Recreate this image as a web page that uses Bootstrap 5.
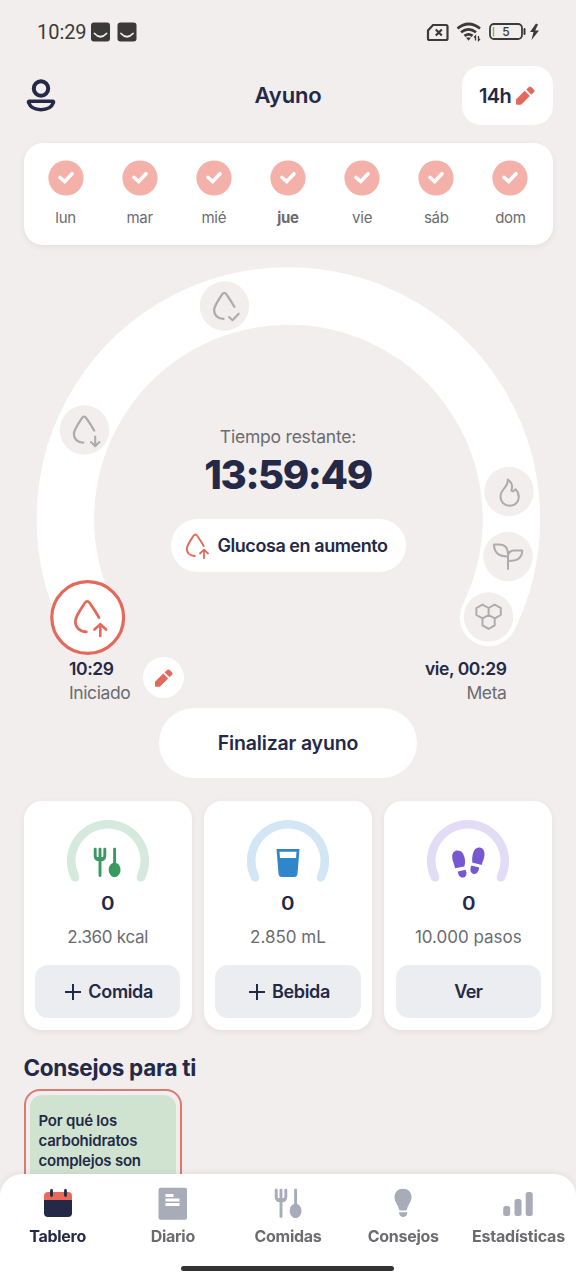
<!DOCTYPE html>
<html lang="es">
<head>
<meta charset="utf-8">
<meta name="viewport" content="width=device-width, initial-scale=1">
<title>Ayuno</title>
<link href="https://cdn.jsdelivr.net/npm/bootstrap@5.3.0/dist/css/bootstrap.min.css" rel="stylesheet">
<style>
:root{--ink:#232946;--muted:#6b6b70;--bg:#f2eeed;--coral:#e2695b;--grey:#a8abb8}
html,body{height:100%}
body{background:var(--bg);color:var(--ink);font-family:Inter,"Liberation Sans",sans-serif;overflow:hidden}
svg{display:block}
.soft-shadow{box-shadow:0 2px 6px rgba(90,70,70,.08)}
.statusbar{height:64px;padding:0 36px 0 37px;color:#3b3a38}
.clock{font:400 20px/24px Roboto,sans-serif;letter-spacing:-.05px}
.topbar{height:61px;padding:2px 23.5px 0 26px}
.page-title{left:0;right:0;top:17px;font-size:22px;line-height:28px;font-weight:600;letter-spacing:-.16px}
.goal-btn{width:91px;height:59px;border-radius:19px;font-size:20px;font-weight:600;letter-spacing:-.6px;gap:5px;color:var(--ink)}
.week{margin:18px 23.5px 0;height:102px;border-radius:19px;padding:16.5px 5px 0}
.day{font-size:15px;line-height:20px;letter-spacing:-.25px;color:var(--muted)}
.day svg{margin-bottom:12px}
.fast{height:463px}
.ring{top:0;left:0}
.remain{padding-top:180px;font-size:17.5px;line-height:24px;letter-spacing:-.21px;color:var(--muted)}
.timer{font-size:40px;line-height:50px;font-weight:800;letter-spacing:-1.4px;padding-top:1px;margin-bottom:-1px}
.stage{width:235px;height:53px;margin-top:20px;font-size:18px;font-weight:600;letter-spacing:-.44px;gap:8px;padding-right:2px}
.times{margin-top:85px;padding:0 69.5px 0 69px;font-size:17.5px;line-height:24px;letter-spacing:-.4px}
.times .edit{width:41px;height:41px;margin:0 0 7px 13px}
.times .sub{color:var(--muted)}
.end-btn{width:258px;height:70px;font-size:19.5px;font-weight:600;letter-spacing:-.17px;color:var(--ink)}
.end-btn span{position:relative;top:.5px}
.stats{margin:23px 23.5px 0;gap:12px}
.stat{height:229px;border-radius:18px;padding:18px 11.5px 0}
.stat .num{font-size:19px;line-height:24px;font-weight:600;margin-top:9px;transform:scaleX(1.08)}
.stat .goal{font-size:17px;line-height:24px;color:var(--muted);margin-top:9px}
.stat .act{height:53px;border-radius:13px;background:#ecedf1;font-size:18px;font-weight:600;letter-spacing:-.35px;margin-top:16px;gap:7px;padding-left:3px}
.tips-title{margin:24px 0 0 23.5px;font-size:22.5px;line-height:28px;font-weight:700;letter-spacing:-.3px}
.tip{margin:7px 0 0 23.5px;width:158.5px;height:200px;border:2px solid #d97b73;border-radius:16px;padding:4px}
.tip-body{background:#d0e3d1;border-radius:12px;padding:15.5px 9px;font-size:15px;line-height:20.4px;font-weight:600;letter-spacing:-.22px}
.tabs{height:106px;border-radius:22px 22px 0 0;box-shadow:0 -1px 6px rgba(90,70,70,.09)}
.tab{flex:1 0 0;width:0;padding-top:12px;font-size:16px;line-height:22px;font-weight:700;letter-spacing:-.28px;color:var(--muted);white-space:nowrap}
.tab svg{margin-bottom:5px}
.tab.on{color:var(--ink)}
.homebar{width:213px;height:5px;bottom:9px;background:#333;border-radius:3px;left:181px}
</style>
</head>
<body>
<svg width="0" height="0" class="position-absolute" aria-hidden="true">
  <defs>
    <symbol id="check" viewBox="0 0 36 36"><circle cx="18" cy="18" r="17.6" fill="#f3b1aa"/><path d="M12 17.500l4.700 4 7.300-7.800" fill="none" stroke="#fff" stroke-width="3.600" stroke-linecap="round" stroke-linejoin="miter"/></symbol>
    <symbol id="pencil" viewBox="0 0 18 18"><path d="M0 16.8V13.2Q0 12.700 .4 12.300L8.300 4.600 13.100 9.500 5.300 17.300Q4.800 17.800 4.200 17.800H1Q0 17.800 0 16.800zM9.700 3.400L12 1.100Q13.300-.2 14.700 1.100L16.900 3.300Q18.200 4.700 16.900 6L14.600 8.200z" fill="#e2695b"/></symbol>
    <symbol id="drop" viewBox="0 0 28 36" overflow="visible"><path d="M12.800 33.200C5.800 33 1.300 28.500 1.300 22.500C1.300 17.500 5 12.500 11.300 3C12.800 .8 14.800 .8 16.200 3C20 8.500 23 13 26 18.300" fill="none" stroke-width="2.800" stroke-linecap="round"/></symbol>
    <symbol id="cutlery" viewBox="0 0 28 30"><path d="M2.200 1.500V8.500Q2.200 12.500 6.800 12.500T11.800 8.500V1.500M7 1.500V28" fill="none" stroke="currentColor" stroke-width="2.900" stroke-linecap="round"/><path d="M3.500 9.500h7v3.500h-7z" fill="currentColor"/><path d="M21.600 1.500V18" stroke="currentColor" stroke-width="2.900" stroke-linecap="round"/><path d="M21.600 15.200C25 15.200 27.500 18.500 27.500 22.200S25 29.500 21.600 29.500 15.700 26 15.700 22.200 18.200 15.200 21.600 15.200z" fill="currentColor"/></symbol>
    <symbol id="gauge" viewBox="0 0 84 64"><path d="M9 58.300A36.800 36.800 0 1 1 75 58.300" fill="none" stroke="currentColor" stroke-width="8.600" stroke-linecap="round"/></symbol>
  </defs>
</svg>

<div class="statusbar d-flex align-items-center justify-content-between">
  <div class="d-flex align-items-center gap-1">
    <span class="clock">10:29</span>
    <svg width="46" height="20" viewBox="0 0 46 20"><g fill="#3b3a38"><rect x="0" y=".5" width="19" height="19" rx="3"/><rect x="26.500" y=".5" width="19" height="19" rx="3"/></g><path d="M3.500 11.500q6 6.500 12 0M30 11.500q6 6.500 12 0" fill="none" stroke="#f2eeed" stroke-width="1.800" stroke-linecap="round"/></svg>
  </div>
  <svg width="114" height="22" viewBox="426 21 114 22" fill="none" stroke="#3b3a38">
    <path d="M433 25h13q1.500 0 1.500 1.500v12q0 1.500-1.500 1.500h-16.500q-1.500 0-1.500-1.500v-8z" stroke-width="2.200"/><path d="M435.800 29.500l6 6M441.800 29.500l-6 6" stroke-width="2.200"/>
    <path d="M457.500 28.500q11-9 22.500 0M461 32.300q7.500-6 15 0M464.500 35.900q4.200-3.200 8 0" stroke-width="2.700"/><path d="M466 37.500h5l-2.500 3.200z" fill="#3b3a38" stroke="none"/><path d="M475.500 40.500v-4.500l-1.500 1.500M478.500 36v4.500l1.500-1.500" stroke-width="1.300"/>
    <rect x="490" y="24" width="32" height="15" rx="4" stroke-width="1.800"/><path d="M524.500 29v5" stroke-width="2" stroke-linecap="round"/><path d="M493.500 27v9.500" stroke="#72c04d" stroke-width="1.400"/>
    <text x="502.300" y="36" font-family="Inter" font-size="12" font-weight="500" fill="#3b3a38" stroke="none">5</text>
    <path d="M536 23.500l-6 8.500h3.500l-2 8 7.500-9.500h-3.800l2.800-6z" fill="#3b3a38" stroke="none"/>
  </svg>
</div>

<header class="topbar position-relative d-flex align-items-center justify-content-between">
  <svg width="30" height="34" viewBox="0 0 30 34" fill="none" stroke="#232946" stroke-width="4"><circle cx="15" cy="9.500" r="7.200"/><path d="M3.500 22.200Q2 22.200 2.600 23.700C4.300 28.200 9 30.700 15 30.700S25.700 28.200 27.400 23.700Q28 22.200 26.500 22.200z" stroke-width="3.500"/></svg>
  <h1 class="page-title position-absolute text-center m-0">Ayuno</h1>
  <button class="goal-btn btn bg-white border-0 p-0 d-flex align-items-center justify-content-center">14h <svg width="19" height="19"><use href="#pencil"/></svg></button>
</header>

<section class="week soft-shadow bg-white d-flex">
  <div class="day flex-fill w-100 d-flex flex-column align-items-center"><svg width="36" height="36"><use href="#check"/></svg>lun</div>
  <div class="day flex-fill w-100 d-flex flex-column align-items-center"><svg width="36" height="36"><use href="#check"/></svg>mar</div>
  <div class="day flex-fill w-100 d-flex flex-column align-items-center"><svg width="36" height="36"><use href="#check"/></svg>mié</div>
  <div class="day flex-fill w-100 d-flex flex-column align-items-center fw-bold"><svg width="36" height="36"><use href="#check"/></svg>jue</div>
  <div class="day flex-fill w-100 d-flex flex-column align-items-center"><svg width="36" height="36"><use href="#check"/></svg>vie</div>
  <div class="day flex-fill w-100 d-flex flex-column align-items-center"><svg width="36" height="36"><use href="#check"/></svg>sáb</div>
  <div class="day flex-fill w-100 d-flex flex-column align-items-center"><svg width="36" height="36"><use href="#check"/></svg>dom</div>
</section>

<section class="fast position-relative">
  <svg class="ring position-absolute" width="576" height="420" viewBox="0 245 576 420">
    <path d="M88.300 617A223 223 0 1 1 488.500 617" fill="none" stroke="#fff" stroke-width="57.500" stroke-linecap="round" transform="translate(0 .5)"/>
    <g fill="#f2eeed"><circle cx="84.500" cy="430" r="24.700"/><circle cx="224.500" cy="306" r="24.700"/><circle cx="509" cy="491.500" r="24.700"/><circle cx="508" cy="556.500" r="24.700"/><circle cx="488.500" cy="617" r="24.700"/></g>
    <g fill="none" stroke="#adabae" stroke-width="2.100" stroke-linecap="round" stroke-linejoin="round">
      <use href="#drop" x="72.800" y="415.500" width="23" height="29.500"/>
      <path d="M95.200 436.500v9.500M91 442l4.200 4.200 4.200-4.200"/>
      <use href="#drop" x="213" y="291.700" width="23" height="29.500"/>
      <path d="M229 317l3.500 3.200 6.200-6.500"/>
      <path d="M507.800 479.500C511.500 482 513 486 511.300 490.500Q512.800 492.500 515.500 489.200C518 492 518.800 494.500 518.800 497C518.800 502 515 505.800 509.800 505.800S500.500 502 500.500 496.500C500.500 489 508.500 487.500 507.800 479.500z" stroke-width="2"/>
      <path d="M508 569V557Q508 550.500 514.500 550.500H522.200C522.200 557 518.500 561 508.500 561M508 556.500C498 556.500 494 551.500 494 544.500H499.500C505.500 544.500 508 548.500 508 554" stroke-width="2"/>
      <path d="M482.500 604.900l6.100 3.400v7l-6.100 3.400-6.100-3.400v-7zM494.700 604.900l6.100 3.400v7l-6.100 3.400-6.100-3.400v-7zM488.600 615.300l6.100 3.400v7l-6.100 3.400-6.100-3.400v-7z" stroke-width="2" transform="translate(0 -.3)"/>
    </g>
    <circle cx="87.700" cy="617.500" r="35.900" fill="#fff" stroke="#e2695b" stroke-width="3.200"/>
    <g fill="none" stroke="#e2695b" stroke-width="2.600" stroke-linecap="round" stroke-linejoin="round"><use href="#drop" x="74" y="600" width="27" height="34.500"/><path d="M100.300 636v-10.500M94.500 629.500l5.800-5.300 5.800 5.300"/></g>
  </svg>
  <div class="position-relative d-flex flex-column align-items-center">
    <div class="remain">Tiempo restante:</div>
    <div class="timer">13:59:49</div>
    <div class="stage bg-white rounded-pill d-flex align-items-center justify-content-center">
      <svg width="23" height="26" viewBox="0 0 23 26" fill="none" stroke="#e2695b" stroke-width="1.800" stroke-linecap="round" stroke-linejoin="round"><use href="#drop" x="0" y=".5" width="19" height="24.500"/><path d="M18 25.200v-8M14 20.500l4-3.800 4 3.800"/></svg>
      Glucosa en aumento
    </div>
  </div>
  <div class="times position-relative d-flex justify-content-between">
    <div class="d-flex align-items-center">
      <div><div class="fw-semibold">10:29</div><div class="sub">Iniciado</div></div>
      <button class="edit btn bg-white rounded-circle border-0 p-0 d-flex align-items-center justify-content-center"><svg width="18" height="18"><use href="#pencil"/></svg></button>
    </div>
    <div class="text-end"><div class="fw-semibold">vie, 00:29</div><div class="sub">Meta</div></div>
  </div>
</section>

<button class="end-btn btn bg-white rounded-pill border-0 d-block mx-auto p-0"><span>Finalizar ayuno</span></button>

<section class="stats d-flex">
  <div class="stat soft-shadow bg-white flex-fill w-100 text-center">
    <svg class="mx-auto" width="84" height="64" viewBox="0 0 84 64"><use href="#gauge" color="#d6e9dd"/><use href="#cutlery" x="27" y="28.500" width="28" height="30" color="#389a5e"/></svg>
    <div class="num">0</div><div class="goal" style="letter-spacing:-.28px">2.360 kcal</div>
    <div class="act d-flex align-items-center justify-content-center"><svg width="16" height="16" stroke="#232946" stroke-width="2"><path d="M0 8h16M8 0v16"/></svg>Comida</div>
  </div>
  <div class="stat soft-shadow bg-white flex-fill w-100 text-center">
    <svg class="mx-auto" width="84" height="64" viewBox="0 0 84 64"><use href="#gauge" color="#d3e6f5"/><path d="M30.500 30h23l-2 24.500q-.3 3.500-3.500 3.500h-12q-3.200 0-3.500-3.500zM33.500 32.700l.5 6.300h16l.5-6.300z" fill="#2f86cb" fill-rule="evenodd"/></svg>
    <div class="num">0</div><div class="goal">2.850 mL</div>
    <div class="act d-flex align-items-center justify-content-center"><svg width="16" height="16" stroke="#232946" stroke-width="2"><path d="M0 8h16M8 0v16"/></svg>Bebida</div>
  </div>
  <div class="stat soft-shadow bg-white flex-fill w-100 text-center">
    <svg class="mx-auto" width="84" height="64" viewBox="0 0 84 64"><use href="#gauge" color="#e3dcf5"/><g fill="#7659d2" transform="translate(.5 .3)"><path d="M28.500 49C27.800 44 25.700 42 25.700 37.500C25.700 33.500 27.800 31.200 31 31.200C35 31.200 37.500 34.500 38.300 39.500C38.800 43 38.600 45 37.800 47.200zM31.500 52.300L38.900 50.400C41 54 40 57.500 37 58.200C34 58.900 31.500 56.500 31.500 52.300z"/><path d="M45.800 43.200C45.500 40 45.700 37 46.500 34C47.500 30 50 27.800 53.200 28.200C56.500 28.600 58.400 31.500 58 36C57.600 40 56 42 55.200 45.600zM44.900 46.300L52.600 48.200C52.300 52.500 50 55.200 47 54.600C44 54 43 50.500 44.900 46.300z"/></g></svg>
    <div class="num">0</div><div class="goal">10.000 pasos</div>
    <div class="act d-flex align-items-center justify-content-center ps-0" style="letter-spacing:-.6px">Ver</div>
  </div>
</section>

<h2 class="tips-title">Consejos para ti</h2>
<article class="tip"><div class="tip-body h-100">Por qué los carbohidratos complejos son</div></article>

<nav class="tabs fixed-bottom bg-white d-flex">
  <div class="tab on d-flex flex-column align-items-center"><svg width="32" height="34" viewBox="0 0 32 34"><path d="M2 14h28v13q0 4-4 4H6q-4 0-4-4z" fill="#232946"/><path d="M2 14V10q0-4 4-4h20q4 0 4 4V14z" fill="#e96a5c"/><path d="M9.500 4.500v5M23.500 4.500v5" stroke="#232946" stroke-width="2.800" stroke-linecap="round"/></svg>Tablero</div>
  <div class="tab d-flex flex-column align-items-center"><svg width="30" height="34" viewBox="0 0 30 34"><rect x=".5" y="1.800" width="28.500" height="32" rx="2" fill="#a8abb8"/><path d="M7.500 9.500h8M7.500 14h14M7.500 18.500h14" stroke="#fff" stroke-width="2.900"/></svg>Diario</div>
  <div class="tab d-flex flex-column align-items-center"><svg width="29" height="34" viewBox="0 0 29 34" color="#a8abb8"><use href="#cutlery" x="0" y="2.500" width="28" height="30"/></svg>Comidas</div>
  <div class="tab d-flex flex-column align-items-center"><svg width="18" height="34" viewBox="0 0 18 34" fill="#a8abb8"><path d="M9 2.800C14 2.800 17.500 6.300 17.500 11C17.500 15.700 14.500 18 13.300 22.300Q13 24.500 11.500 24.500H6.500Q5 24.500 4.700 22.300C3.500 18 .5 15.700 .5 11C.5 6.300 4 2.800 9 2.800zM5.700 26.200h7q.8 0 .6 1Q12.500 31 9.200 31T5.100 27.200q-.2-1 .6-1z"/></svg>Consejos</div>
  <div class="tab d-flex flex-column align-items-center"><svg width="32" height="34" viewBox="0 0 32 34" fill="#a8abb8"><rect x="1.200" y="20" width="7" height="10" rx="2.500"/><rect x="12.500" y="13" width="7" height="17" rx="2.500"/><rect x="23.700" y="6" width="7" height="24" rx="2.500"/></svg><span style="letter-spacing:-.19px">Estadísticas</span></div>
  <div class="homebar position-absolute"></div>
</nav>
<script src="https://cdn.jsdelivr.net/npm/bootstrap@5.3.0/dist/js/bootstrap.bundle.min.js"></script>
</body>
</html>
